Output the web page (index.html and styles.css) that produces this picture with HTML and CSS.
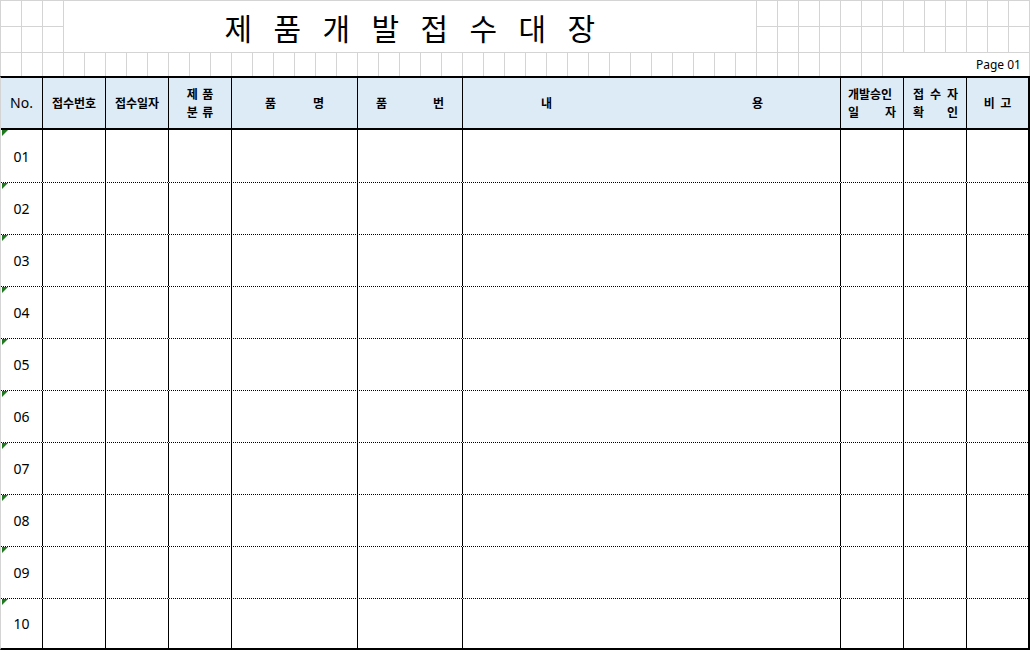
FILE: index.html
```html
<!DOCTYPE html>
<html lang="ko">
<head>
<meta charset="utf-8">
<title>제품개발접수대장</title>
<link rel="stylesheet" href="styles.css">
</head>
<body>
<div class="sheet">
  <div class="top">
    <div class="title">제 품 개 발 접 수 대 장</div>
    <div class="page">Page 01</div>
  </div>
  <div class="table">
    <div class="row head">
      <div class="c no">No.</div>
      <div class="c">접수번호</div>
      <div class="c">접수일자</div>
      <div class="c two"><span>제 품</span><span>분 류</span></div>
      <div class="c spread sp-name"><span>품</span><span>명</span></div>
      <div class="c spread sp-num"><span>품</span><span>번</span></div>
      <div class="c spread sp-desc"><span>내</span><span>용</span></div>
      <div class="c dist dist-a">
        <div class="line"><span>개발승인</span></div>
        <div class="line"><span>일</span><span>자</span></div>
      </div>
      <div class="c dist dist-b">
        <div class="line"><span>접</span><span>수</span><span>자</span></div>
        <div class="line"><span>확</span><span>인</span></div>
      </div>
      <div class="c last bigo">비 고</div>
    </div>
    <div class="row"><div class="c idx">01</div><div class="c"></div><div class="c"></div><div class="c"></div><div class="c"></div><div class="c"></div><div class="c"></div><div class="c"></div><div class="c"></div><div class="c last"></div></div>
    <div class="row"><div class="c idx">02</div><div class="c"></div><div class="c"></div><div class="c"></div><div class="c"></div><div class="c"></div><div class="c"></div><div class="c"></div><div class="c"></div><div class="c last"></div></div>
    <div class="row"><div class="c idx">03</div><div class="c"></div><div class="c"></div><div class="c"></div><div class="c"></div><div class="c"></div><div class="c"></div><div class="c"></div><div class="c"></div><div class="c last"></div></div>
    <div class="row"><div class="c idx">04</div><div class="c"></div><div class="c"></div><div class="c"></div><div class="c"></div><div class="c"></div><div class="c"></div><div class="c"></div><div class="c"></div><div class="c last"></div></div>
    <div class="row"><div class="c idx">05</div><div class="c"></div><div class="c"></div><div class="c"></div><div class="c"></div><div class="c"></div><div class="c"></div><div class="c"></div><div class="c"></div><div class="c last"></div></div>
    <div class="row"><div class="c idx">06</div><div class="c"></div><div class="c"></div><div class="c"></div><div class="c"></div><div class="c"></div><div class="c"></div><div class="c"></div><div class="c"></div><div class="c last"></div></div>
    <div class="row"><div class="c idx">07</div><div class="c"></div><div class="c"></div><div class="c"></div><div class="c"></div><div class="c"></div><div class="c"></div><div class="c"></div><div class="c"></div><div class="c last"></div></div>
    <div class="row"><div class="c idx">08</div><div class="c"></div><div class="c"></div><div class="c"></div><div class="c"></div><div class="c"></div><div class="c"></div><div class="c"></div><div class="c"></div><div class="c last"></div></div>
    <div class="row"><div class="c idx">09</div><div class="c"></div><div class="c"></div><div class="c"></div><div class="c"></div><div class="c"></div><div class="c"></div><div class="c"></div><div class="c"></div><div class="c last"></div></div>
    <div class="row"><div class="c idx">10</div><div class="c"></div><div class="c"></div><div class="c"></div><div class="c"></div><div class="c"></div><div class="c"></div><div class="c"></div><div class="c"></div><div class="c last"></div></div>
  </div>
</div>
</body>
</html>
```
FILE: styles.css
```css
* { box-sizing: border-box; }
html, body { margin: 0; padding: 0; background: #fff; }
body {
  font-family: "Noto Sans CJK KR", "Noto Sans", sans-serif;
  color: #000;
  overflow: hidden;
}
.sheet { width: 1030px; height: 651px; }

.top {
  height: 76px;
  width: 1030px;
  display: grid;
  grid-template-columns: repeat(49, 21px) 1fr;
  grid-template-rows: 26px 26px 24px;
  background-image:
    linear-gradient(to right, #d4d4d4 1px, transparent 1px),
    linear-gradient(to bottom, #d4d4d4 1px, transparent 1px);
  background-size: 21px 100%, 100% 26px;
}
.title {
  grid-column: 4 / 37;
  grid-row: 1 / 3;
  margin: 1px 0 0 1px;
  background: #fff;
  display: flex;
  align-items: center;
  justify-content: center;
  font-size: 30px;
  letter-spacing: 6.5px;
  padding-left: 6px;
  white-space: pre;
  line-height: 1;
}
.page {
  grid-column: 43 / 50;
  grid-row: 3;
  margin: 1px 0 0 1px;
  background: #fff;
  display: flex;
  align-items: center;
  justify-content: flex-end;
  padding-right: 8px;
  font-family: "Noto Sans", sans-serif;
  font-size: 12px;
}

.table {
  width: 1030px;
  border-top: 2px solid #000;
  border-bottom: 2px solid #000;
  border-right: 2px solid #000;
  border-left: 1px solid #d4d4d4;
}
.row {
  display: grid;
  grid-template-columns: 42px 63px 63px 63px 126px 105px 378px 63px 63px 1fr;
  height: 52px;
}
.row + .row + .row { border-top: 1px dotted #000; }
.row:last-child { height: 50px; }
.row.head {
  height: 52px;
  border-bottom: 2px solid #000;
  background: #ddebf7;
}
.c {
  border-right: 1px solid #000;
  display: flex;
  align-items: center;
  justify-content: center;
  position: relative;
}
.c.last { border-right: none; }

.head .c {
  font-size: 12px;
  font-weight: 700;
  line-height: 18px;
}
.head .c.no {
  font-family: "Noto Sans", sans-serif;
  font-weight: 400;
  font-size: 14px;
}
.head .two {
  flex-direction: column;
  word-spacing: 1px;
}
.head .spread { justify-content: space-between; }
.sp-name { padding: 0 33px 0 33px; }
.sp-num { padding: 0 18px 0 18px; }
.sp-desc { padding: 0 77px 0 78px; }
.head .dist {
  flex-direction: column;
  align-items: stretch;
}
.dist .line {
  display: flex;
  justify-content: space-between;
}
.dist-a { padding: 0 7px 0 7px; }
.dist-b { padding: 0 8px 0 9px; }
.bigo { word-spacing: 2px; }

.idx {
  font-family: "Noto Sans", sans-serif;
  font-size: 14px;
}
.idx::before {
  content: "";
  position: absolute;
  left: 1px;
  top: 0;
  width: 0;
  height: 0;
  border-top: 6px solid #1f7a1f;
  border-right: 6px solid transparent;
}
```
